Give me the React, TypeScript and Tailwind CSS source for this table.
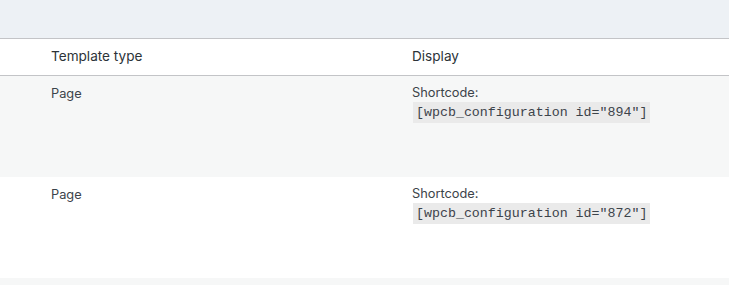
const rows = [
  { type: "Page", id: "894" },
  { type: "Page", id: "872" },
];

export default function App() {
  return (
    <div className="h-[285px] w-[729px] overflow-hidden bg-[#edf1f5] font-['Inter','Liberation_Sans',sans-serif] text-[#2c3338]">
      <div className="h-[38px]" />
      <table className="w-full border-collapse border-t border-[#c3c4c7] bg-white text-left">
        <thead>
          <tr className="h-[37px] border-b border-[#c3c4c7]">
            <th className="w-[412px] pb-[1px] pl-[51px] text-[13.6px] font-normal text-[#2c3338]">Template type</th>
            <th className="pb-[1px] text-[13.6px] font-normal text-[#2c3338]">Display</th>
          </tr>
        </thead>
        <tbody>
          {rows.map((row, i) => (
            <tr key={row.id} className={i % 2 === 0 ? "h-[101px] bg-[#f6f7f7]" : "h-[101px] bg-white"}>
              <td className="pl-[51px] pt-[8px] align-top text-[12.8px] text-[#3c434a]">{row.type}</td>
              <td className="pt-[8px] align-top text-[12.8px] text-[#3c434a]">
                <div className="leading-[18px]">Shortcode:</div>
                <code className="ml-[1px] inline-block bg-[#eaeaea] px-[3px] py-[1px] font-['Liberation_Mono',monospace] text-[13.3px] leading-[19px] text-[#3c434a]">
                  [wpcb_configuration id="{row.id}"]
                </code>
              </td>
            </tr>
          ))}
        </tbody>
      </table>
      <div className="h-[10px] bg-[#f6f7f7]" />
    </div>
  );
}
